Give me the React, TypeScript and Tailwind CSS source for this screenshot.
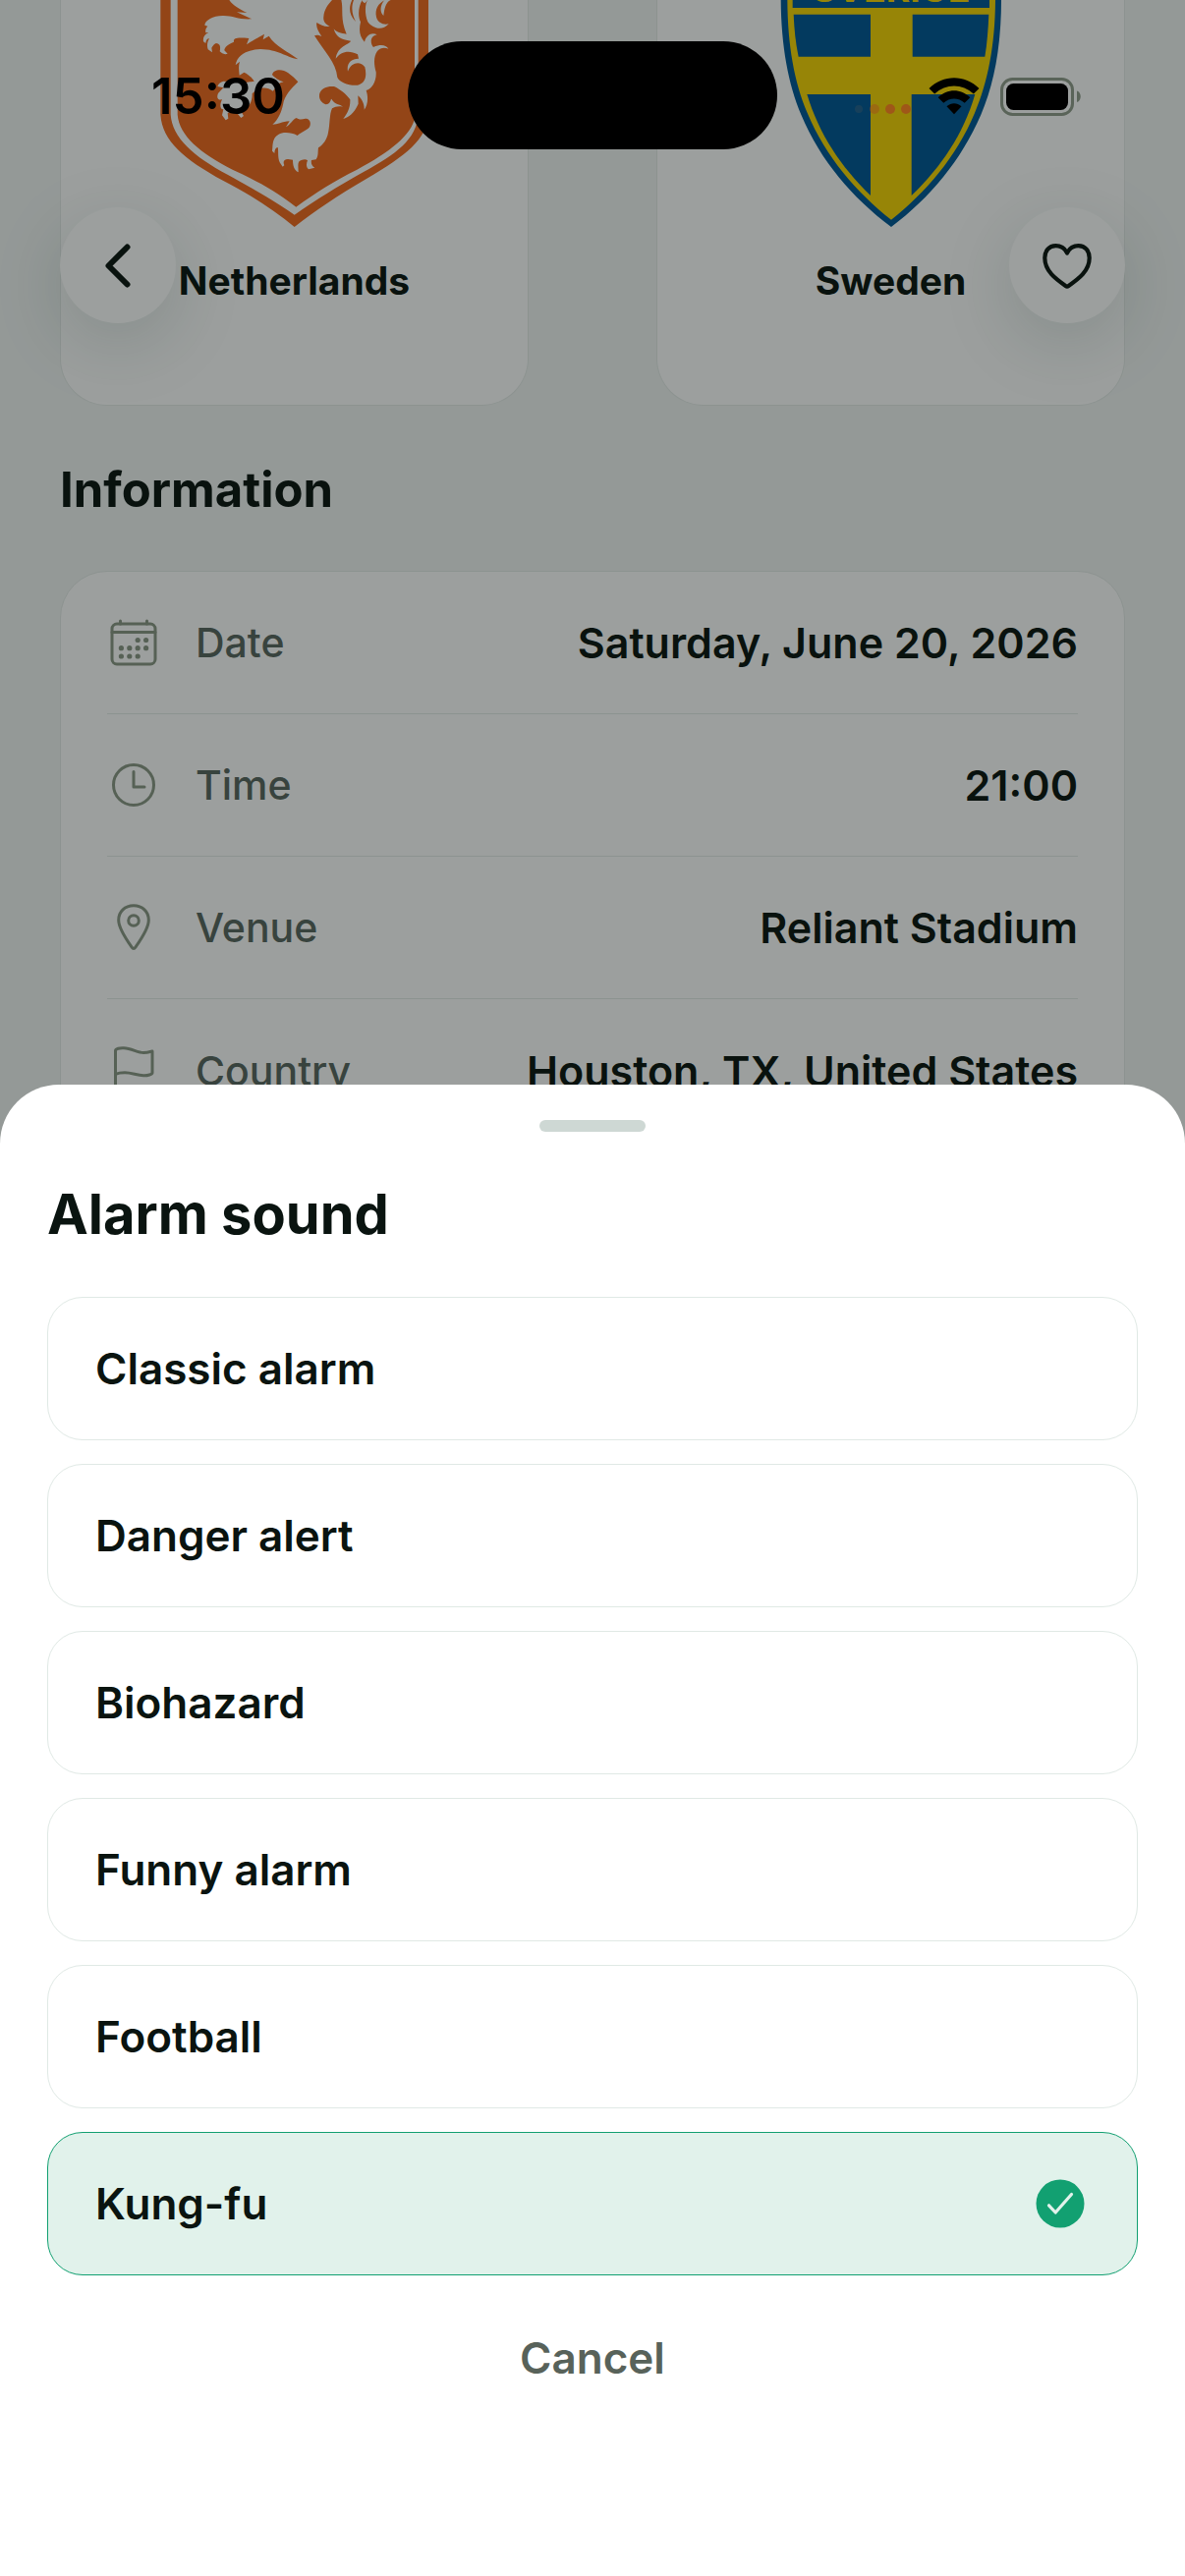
import React, { useState } from 'react';

const DETAILS = [
  { label: 'Date', value: 'Saturday, June 20, 2026', icon: <CalendarIcon /> },
  { label: 'Time', value: '21:00', icon: <ClockIcon /> },
  { label: 'Venue', value: 'Reliant Stadium', icon: <PinIcon /> },
  { label: 'Country', value: 'Houston, TX, United States', icon: <FlagIcon /> },
];

const SOUNDS = ['Classic alarm', 'Danger alert', 'Biohazard', 'Funny alarm', 'Football', 'Kung-fu'];

function CalendarIcon() {
  return (
    <svg viewBox="0 0 54 54" className="w-[54px] h-[54px]" fill="none" stroke="currentColor" strokeWidth="3" strokeLinecap="round" aria-hidden="true">
      <rect x="5" y="8" width="44" height="41" rx="5" />
      <path d="M5 16.5H49M13.5 5V8M40.500 5V8" />
      <g fill="currentColor" stroke="none">
        <circle cx="31.200" cy="24.500" r="2.600" />
        <circle cx="39.600" cy="24.500" r="2.600" />
        <circle cx="14.400" cy="32.700" r="2.600" />
        <circle cx="22.800" cy="32.700" r="2.600" />
        <circle cx="31.200" cy="32.700" r="2.600" />
        <circle cx="39.600" cy="32.700" r="2.600" />
        <circle cx="14.400" cy="41" r="2.600" />
        <circle cx="22.800" cy="41" r="2.600" />
        <circle cx="31.200" cy="41" r="2.600" />
      </g>
    </svg>
  );
}

function ClockIcon() {
  return (
    <svg viewBox="0 0 54 54" className="w-[54px] h-[54px]" fill="none" stroke="currentColor" strokeWidth="3" strokeLinecap="round" strokeLinejoin="round" aria-hidden="true">
      <circle cx="27" cy="27" r="20.500" />
      <path d="M27 13.500V29H38" />
    </svg>
  );
}

function PinIcon() {
  return (
    <svg viewBox="0 0 54 54" className="w-[54px] h-[54px]" fill="none" stroke="currentColor" strokeWidth="3" strokeLinejoin="round" aria-hidden="true">
      <path d="M27 4.800C18.200 4.800 11.700 10.800 11.700 19.500C11.700 28.500 20.500 40.500 25.200 47.200C26.200 48.800 27.800 48.800 28.800 47.200C33.500 40.500 42.300 28.500 42.300 19.500C42.300 10.800 35.800 4.800 27 4.800Z" />
      <circle cx="27" cy="20" r="5.300" />
    </svg>
  );
}

function FlagIcon() {
  return (
    <svg viewBox="0 0 54 54" className="w-[54px] h-[54px]" fill="none" stroke="currentColor" strokeWidth="3" strokeLinecap="round" strokeLinejoin="round" aria-hidden="true">
      <path d="M8.500 49V6.500C8.500 4.500 13 3.500 17 3.800C25 4.300 31 8.500 37 8.500C41 8.500 44 7.500 46 7V29C46 30.500 41.500 32 37 31.800C30 31.500 25 28.800 18 28.800C14 28.800 10.500 29.500 8.500 30.300" />
    </svg>
  );
}

const NetherlandsCrest: React.FC = () => (
  <svg viewBox="60 0 840 696" className="w-[280px] h-[232px]" role="img" aria-label="Netherlands crest">
    <path fill="#f0691e" d="M70 0V350C76 430 140 485 262 552C350 597 420 645 479 693C540 645 610 597 700 545C820 475 883 425 888 350V0Z" />
    <path fill="#ffffff" d="M101 0V350C106 420 170 477 276 534C360 580 420 615 479 656C545 610 610 570 690 525C790 470 852 425 857 350V0H846V360C838 410 770 465 670 518C600 552 545 588 484 632C420 582 360 550 290 518C190 466 128 415 122 350V0Z" />
    <g fill="#ffffff">
      <path d="M280 0C292 18 312 28 334 39L303 37C318 44 334 51 349 58C310 61 290 47 260 48C230 48 206 62 205 77L214 80C207 87 207 94 208 100L217 99C204 105 199 114 201 127L208 132C209 123 212 118 219 118C213 127 211 139 215 151L228 160L226 146C230 140 236 132 240 132C252 133 254 142 251 157C257 163 265 168 275 164L265 154C266 143 275 136 294 128C292 116 302 114 340 117L333 136C345 127 358 120 387 104L383 121C389 117 395 113 401 110C421 142 459 157 490 181C450 173 430 151 375 150C337 152 304 166 299 199C303 195 307 191 312 188C307 204 310 218 311 230L325 221C339 227 350 238 356 248L330 252C322 243 310 240 296 250L262 248C254 250 247 255 244 264L262 268L246 285C240 300 246 306 258 304C250 320 252 335 262 334L258 352L269 367L277 362L275 346C285 338 292 338 304 346L316 360L324 354L316 340C338 332 351 312 350 286C364 270 391 260 413 278C424 270 421 254 446 250C433 247 418 237 411 228C415 211 442 209 460 223C474 233 481 241 490 250C469 271 448 292 444 320C439 342 430 364 412 380C428 380 440 372 464 370L453 388C467 381 474 363 486 360C490 365 501 366 512 362C526 362 531 374 525 388C515 400 499 404 488 414C469 403 442 403 431 410C415 418 413 435 412 449L411 461L418 468C418 458 422 451 428 450C431 459 427 480 434 496L443 509L448 505C443 493 447 487 459 486L474 488C474 506 478 519 491 526C491 512 488 499 494 492C504 486 513 484 519 490C515 500 514 509 522 517L541 512C531 507 529 496 531 489L545 487C553 475 550 462 552 451C566 443 579 425 582 405C588 380 585 350 594 331C604 325 614 323 627 326C617 316 603 321 592 302C588 303 592 316 574 319C559 314 552 299 556 285C561 269 580 262 600 264C618 272 637 287 649 304C650 330 640 347 628 363C645 357 660 348 674 317L673 292C684 301 693 317 692 335C702 322 706 300 698 276C716 272 730 248 728 220C720 191 722 171 732 156C742 145 754 145 766 149C758 137 743 134 720 144C710 133 709 110 731 106C716 97 698 106 693 128C678 112 675 94 681 67C672 50 674 20 686 0H660C650 25 657 48 666 66C644 45 645 20 655 0H622C629 30 618 57 638 104C621 102 607 98 599 88C605 111 620 122 651 125C645 138 611 138 605 179C620 158 645 151 672 166L675 179C655 178 637 191 642 218C652 190 680 185 694 205C701 234 695 253 672 260C643 262 617 251 610 236C606 190 570 157 540 109C547 106 552 107 562 111C553 97 544 84 547 69C559 75 570 83 587 81C575 73 566 67 568 51C570 28 582 13 594 0Z" />
      <path d="M703 0C694 10 693 44 703 67C715 84 745 98 767 73C751 77 733 70 729 52C724 28 734 10 757 0Z" />
      <path d="M773 0C757 7 754 27 751 48C740 38 739 18 754 0Z" />
      <path d="M685 0C686 5 691 8 694 10L703 0Z" />
    </g>
  </svg>
);

const SwedenCrest: React.FC = () => (
  <svg viewBox="59 0 702 696" className="w-[234px] h-[232px]" role="img" aria-label="Sweden crest">
    <path fill="#005896" d="M73 0C74 140 96 258 135 350C195 492 290 602 410 693C530 602 622 492 684 350C724 258 746 140 746 0Z" />
    <path fill="#f7d404" d="M93 0C94 140 114 250 154 345C210 480 305 588 410 671C515 588 609 480 665 345C705 250 727 140 728 0Z" />
    <g fill="#005896">
      <path d="M109 0H710V24H109Z" />
      <path d="M112 44H347V173H127C118 130 114 90 112 44Z" />
      <path d="M475 44H708C706 90 703 130 696 173H475Z" />
      <path d="M153 288H347V597C255 508 190 410 153 288Z" />
      <path d="M472 288H666C630 410 564 508 472 597Z" />
    </g>
    <text x="410" y="6" textAnchor="middle" fill="#f7d404" fontFamily="Inter, sans-serif" fontWeight="700" fontSize="112">SVERIGE</text>
  </svg>
);

const TeamCard: React.FC<{ name: string; children: React.ReactNode }> = ({ name, children }) => (
  <div className="flex-1 flex flex-col items-center h-[413px] bg-white border border-t-0 border-[#e5ebe8] rounded-b-[48px]">
    {children}
    <p className="mt-8 text-[39px] leading-[44px] font-bold">{name}</p>
  </div>
);

const StatusBar: React.FC = () => (
  <div className="fixed inset-x-0 top-0 pointer-events-none text-black">
    <div className="absolute inset-x-0 top-[42px] flex justify-center">
      <div className="w-[376px] h-[110px] rounded-full bg-black"></div>
    </div>
    <div className="flex justify-between items-center h-[196px] pl-[154px] pr-[105px]">
      <span className="text-[51px] leading-[60px] font-semibold">15:30</span>
      <div className="flex items-center">
        <svg viewBox="0 0 60 12" className="w-[60px] h-[12px] mt-[26px] mr-[16px]" fill="#a0501c" aria-hidden="true">
          <circle cx="5" cy="6" r="4" fill="#21435a" opacity="0.7" />
          <circle cx="21" cy="6" r="5" opacity="0.5" />
          <circle cx="37" cy="6" r="5" opacity="0.85" />
          <circle cx="53" cy="6" r="5" opacity="0.85" />
        </svg>
        <svg viewBox="0 0 52 38" className="w-[52px] h-[38px] mr-[21px]" fill="currentColor" aria-hidden="true">
          <path d="M0.500 11C15-3.500 37-3.500 51.500 11L45.800 16.500C34.500 5.800 17.500 5.800 6.200 16.500Z" />
          <path d="M9.700 20.300C19 11 33 11 42.300 20.300L36.700 25.800C30.500 20 21.500 20 15.300 25.800Z" />
          <path d="M18.500 29.300C23 25.200 29 25.200 33.500 29.300L26 37.200Z" />
        </svg>
        <svg viewBox="0 0 83 39" className="w-[83px] h-[39px]" fill="none" aria-hidden="true">
          <rect x="1.500" y="1.500" width="72" height="36" rx="11" stroke="#5a6459" strokeWidth="3" />
          <rect x="6" y="6" width="63" height="27" rx="7.500" fill="currentColor" />
          <path d="M78 13.500C83 15 83 23.500 78 25Z" fill="#5a6459" />
        </svg>
      </div>
    </div>
  </div>
);

const App: React.FC = () => {
  const [selected, setSelected] = useState('Kung-fu');

  return (
    <div className="relative h-screen overflow-hidden bg-[#f2f5f4] text-[#0a1410] font-['Inter','Liberation_Sans',sans-serif]">
      <main className="px-[61px]">
        <div className="flex gap-[130px]">
          <TeamCard name="Netherlands">
            <NetherlandsCrest />
          </TeamCard>
          <TeamCard name="Sweden">
            <SwedenCrest />
          </TeamCard>
        </div>

        <h2 className="mt-14 mb-[52px] text-[49px] leading-[60px] font-bold">Information</h2>

        <dl className="px-[47px] bg-white border border-[#e5ebe8] rounded-[48px]">
          {DETAILS.map((item) => (
            <div key={item.label} className="flex items-center h-[145px] border-b border-[#e5ebe8] last:border-b-0">
              <span className="text-[#8b9886]">{item.icon}</span>
              <dt className="ml-9 text-[41px] leading-[52px] font-medium text-[#596760]">{item.label}</dt>
              <dd className="ml-auto text-[43px] leading-[52px] font-semibold">{item.value}</dd>
            </div>
          ))}
        </dl>
      </main>

      <header className="absolute inset-x-0 top-[211px] flex justify-between px-[61px]">
        <button type="button" aria-label="Back" className="flex items-center justify-center size-[118px] rounded-full bg-white shadow-[0_20px_72px_rgba(20,60,50,0.16)]">
          <svg viewBox="0 0 60 60" className="size-[60px]" fill="none" stroke="currentColor" strokeWidth="6" strokeLinecap="round" strokeLinejoin="round" aria-hidden="true">
            <path d="M39.500 11.500L20.500 30.500L39.500 49.500" />
          </svg>
        </button>
        <button type="button" aria-label="Add to favourites" className="flex items-center justify-center size-[118px] rounded-full bg-white shadow-[0_20px_72px_rgba(20,60,50,0.16)]">
          <svg viewBox="0 1 60 60" className="size-[60px]" fill="none" stroke="currentColor" strokeWidth="4.200" strokeLinecap="round" strokeLinejoin="round" aria-hidden="true">
            <path d="M30 18.500C27.500 13.500 23 11.200 18.500 11.200C11.500 11.200 7.300 16.500 7.300 23.500C7.300 37 18.500 45 28.500 52C29.500 52.700 30.500 52.700 31.500 52C41.500 45 52.700 37 52.700 23.500C52.700 16.500 48.500 11.200 41.500 11.200C37 11.200 32.500 13.500 30 18.500Z" />
          </svg>
        </button>
      </header>

      <div className="fixed inset-0 bg-[#08100c]/40"></div>

      <section role="dialog" aria-labelledby="sheet-title" className="fixed inset-x-0 bottom-0 px-12 pt-9 pb-[174px] bg-white rounded-t-[60px]">
        <div className="mx-auto w-[108px] h-3 rounded-full bg-[#ced8d4]"></div>
        <h1 id="sheet-title" className="mt-12 mb-12 text-[56px] leading-[72px] font-bold">Alarm sound</h1>

        <div className="flex flex-col gap-6">
          {SOUNDS.map((sound) => {
            const active = sound === selected;
            return (
              <button
                key={sound}
                type="button"
                aria-pressed={active}
                onClick={() => setSelected(sound)}
                className={`flex items-center justify-between h-[146px] px-12 border rounded-[36px] text-[44px] leading-[56px] font-semibold ${
                  active ? 'border-[#12a071] bg-[#e1f2eb]' : 'border-[#e0e9e5] bg-white'
                }`}
              >
                {sound}
                {active && (
                  <svg viewBox="0 0 60 60" className="size-[60px]" fill="none" aria-hidden="true">
                    <circle cx="30" cy="30" r="24.500" fill="#12a071" />
                    <path d="M18.500 31.800L25.200 39L41.500 20.500" stroke="#e1f2eb" strokeWidth="3.200" strokeLinecap="round" strokeLinejoin="round" />
                  </svg>
                )}
              </button>
            );
          })}
        </div>

        <button type="button" className="block mx-auto mt-9 px-12 h-24 text-[44px] leading-[56px] font-semibold text-[#58625a]">
          Cancel
        </button>
      </section>

      <StatusBar />
    </div>
  );
};

export default App;
